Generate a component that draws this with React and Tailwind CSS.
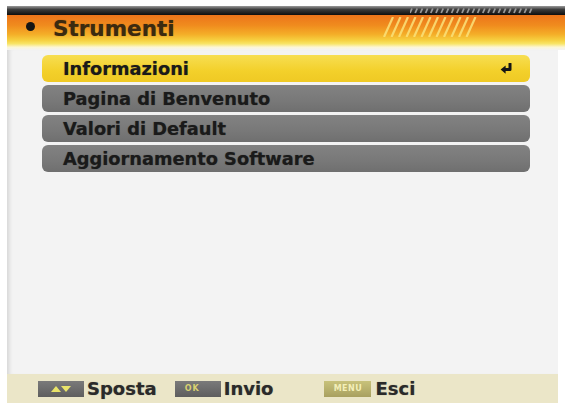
import React from "react";

function ReturnIcon() {
  return (
    <svg width="13" height="12" viewBox="0 0 13 12" className="block">
      <path d="M10 0.8 V6.6 H4.6" fill="none" stroke="#151515" strokeWidth="3" strokeLinejoin="round" strokeLinecap="round" />
      <path d="M0.6 6.6 L5.6 2.4 L5.6 10.8 Z" fill="#151515" />
    </svg>
  );
}

function Row({ label, active }) {
  return (
    <div
      className={
        "h-[27px] rounded-[6px] flex items-center pl-[21px] pr-[17px] text-[17.8px] font-bold leading-[27px] text-[#1a1a1a] [text-shadow:0_0_1px_rgba(0,0,0,0.45)] " +
        (active
          ? "bg-[linear-gradient(to_bottom,#f7de52,#f3d02a_60%,#efc924)]"
          : "bg-[linear-gradient(to_bottom,#828282,#787878_60%,#6f6f6f)]")
      }
    >
      <span className="flex-1">{label}</span>
      {active && <ReturnIcon />}
    </div>
  );
}

function Stripes() {
  const lines = [];
  for (let i = 0; i < 12; i++) {
    const x = 4 + i * 7.5;
    lines.push(<line key={i} x1={x} y1="20" x2={x + 9} y2="0" stroke="#fbe27a" strokeWidth="2.2" opacity="0.85" />);
  }
  return (
    <svg width="100" height="20" viewBox="0 0 100 20" className="block">
      {lines}
    </svg>
  );
}

function Dashes() {
  const d = [];
  for (let i = 0; i < 24; i++) {
    const x = i * 5.2;
    d.push(<line key={i} x1={x} y1="5" x2={x + 2} y2="0.5" stroke="#9a9a9a" strokeWidth="1.8" />);
  }
  return (
    <svg width="124" height="6" viewBox="0 0 124 6" className="block">
      {d}
    </svg>
  );
}

export default function App() {
  return (
    <div className="w-[565px] h-[403px] bg-white overflow-hidden font-['DejaVu_Sans',sans-serif]">
      <div className="pt-[6px] pl-[7px] flex flex-col h-full">
        {/* Header */}
        <div className="relative h-[44px] w-[558px] flex flex-col">
          <div className="h-[9px] bg-[linear-gradient(to_bottom,#9a9a9a,#3a3a3a_40%,#0e0e0e)]" />
          <div className="flex-1 flex items-start pt-[3px] pl-[46px] bg-[linear-gradient(to_bottom,#ec741a_0%,#f08c1e_30%,#f4ae28_55%,#f6d040_72%,#f8e466_82%,#fcf6d6_92%,#f3f3f3_100%)]">
            <span className="text-[21.5px] font-bold leading-[22px] text-[#3b2a10] [text-shadow:0_0_1px_rgba(40,25,0,0.5)]">Strumenti</span>
          </div>
          <div className="absolute left-[19px] top-[16px] w-[9px] h-[9px] rounded-full bg-[#151515]" />
          <div className="absolute left-[373px] top-[11px]">
            <Stripes />
          </div>
          <div className="absolute left-[403px] top-[2px]">
            <Dashes />
          </div>
        </div>
        {/* Body */}
        <div className="flex-1 w-[551px] bg-[#f3f3f3] shadow-[inset_5px_0_4px_-3px_rgba(0,0,0,0.13)] pt-[5px] pl-[35px] pr-[28px] flex flex-col gap-[3px]">
          <Row label="Informazioni" active />
          <Row label="Pagina di Benvenuto" />
          <Row label="Valori di Default" />
          <Row label="Aggiornamento Software" />
        </div>
        {/* Footer */}
        <div className="h-[29px] w-[551px] bg-[#ebe6c8] flex items-center pl-[31px] text-[18px] font-bold text-[#2a2a2a] leading-none [text-shadow:0_0_1px_rgba(0,0,0,0.4)]">
          <div className="w-[46px] h-[16px] bg-[linear-gradient(to_bottom,#7a7a7a,#5e5e5e)] flex items-center justify-center gap-[1px]">
            <svg width="22" height="8" viewBox="0 0 22 8">
              <path d="M1 7 L6 1 L11 7 Z" fill="#e9e46a" />
              <path d="M11 1 L21 1 L16 7 Z" fill="#e9e46a" />
            </svg>
          </div>
          <span className="ml-[3px]">Sposta</span>
          <div className="ml-[18px] w-[46px] h-[16px] bg-[linear-gradient(to_bottom,#7a7a7a,#5e5e5e)] flex items-center pl-[10px] [text-shadow:none]">
            <span className="text-[8px] font-bold text-[#d8d070] tracking-[1px]">OK</span>
          </div>
          <span className="ml-[3px]">Invio</span>
          <div className="ml-[51px] w-[47px] h-[16px] bg-[linear-gradient(to_bottom,#c8c27a,#a8a060)] flex items-center justify-center [text-shadow:none]">
            <span className="text-[8px] font-bold text-[#f3efb8] tracking-[0.5px]">MENU</span>
          </div>
          <span className="ml-[4px]">Esci</span>
        </div>
      </div>
    </div>
  );
}
